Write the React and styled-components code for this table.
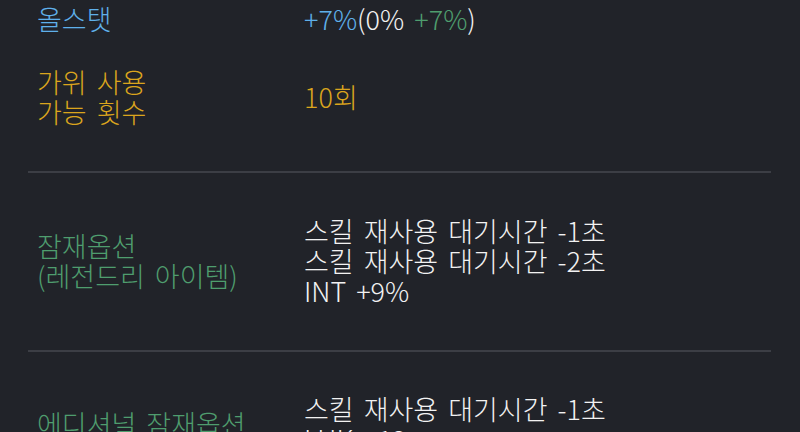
import React from "react";
import styled, { createGlobalStyle } from "styled-components";

const GlobalStyle = createGlobalStyle`
  html, body {
    margin: 0;
    padding: 0;
    background: #212329;
    overflow: hidden;
  }
  body {
    font-family: "Noto Sans CJK KR", "Noto Sans", sans-serif;
  }
`;

const colors = {
  blue: "#5fb0ea",
  gold: "#dba51d",
  green: "#4f9d6e",
  white: "#f2f2f2",
};

const Page = styled.div`
  width: 800px;
  height: 432px;
  padding: 0 29px 0 28px;
  box-sizing: border-box;
  color: ${colors.white};
  font-size: 27px;
  font-weight: 300;
  line-height: 30px;
  word-spacing: 4px;
`;

const Section = styled.div`
  display: flex;
  flex-direction: column;
  gap: ${(p) => p.gap || 0}px;
  padding: ${(p) => p.top}px 0 ${(p) => p.bottom}px;
  border-bottom: ${(p) => (p.last ? "none" : "2px solid #3c3e45")};
`;

const Row = styled.div`
  display: grid;
  grid-template-columns: 267px 1fr;
  align-items: center;
  padding-left: 9px;
`;

const Label = styled.div`
  color: ${(p) => colors[p.tone] || colors.white};
  white-space: pre-line;
`;

const Value = styled.div`
  color: ${(p) => colors[p.tone] || colors.white};
  white-space: pre-line;
`;

const Tint = styled.span`
  color: ${(p) => colors[p.tone]};
`;

export default function App() {
  return (
    <>
      <GlobalStyle />
      <Page>
        <Section top={4} bottom={44} gap={33}>
          <Row>
            <Label tone="blue">올스탯</Label>
            <Value>
              <Tint tone="blue">+7%</Tint>(0% <Tint tone="green">+7%</Tint>)
            </Value>
          </Row>
          <Row>
            <Label tone="gold">{"가위 사용\n가능 횟수"}</Label>
            <Value tone="gold">10회</Value>
          </Row>
        </Section>
        <Section top={43} bottom={44}>
          <Row>
            <Label tone="green">{"잠재옵션\n(레전드리 아이템)"}</Label>
            <Value>
              {"스킬 재사용 대기시간 -1초\n스킬 재사용 대기시간 -2초\nINT +9%"}
            </Value>
          </Row>
        </Section>
        <Section top={42} bottom={44} last>
          <Row>
            <Label tone="green">에디셔널 잠재옵션</Label>
            <Value>{"스킬 재사용 대기시간 -1초\nLUK +12"}</Value>
          </Row>
        </Section>
      </Page>
    </>
  );
}
